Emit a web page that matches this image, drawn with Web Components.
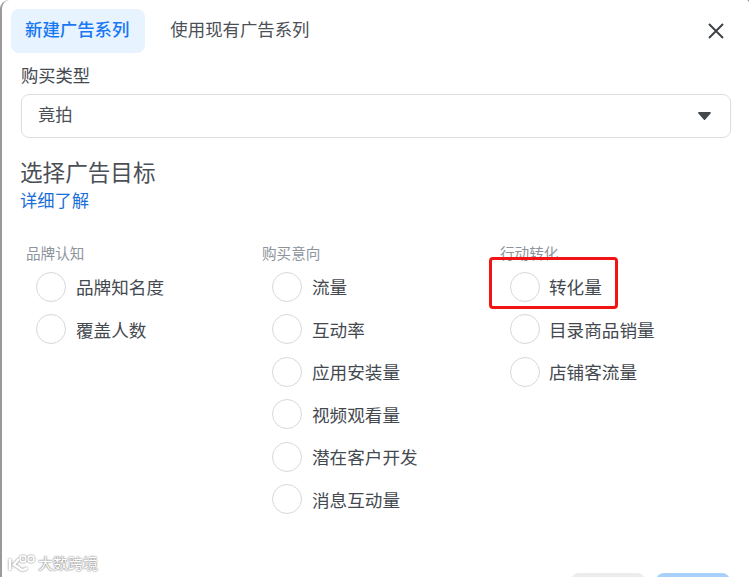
<!DOCTYPE html>
<html lang="zh">
<head>
<meta charset="utf-8">
<title>新建广告系列</title>
<style>
    html, body { margin: 0; height: 100%; background: #fff; overflow: hidden; }
    body { font-family: "Liberation Sans", "Noto Sans CJK SC", sans-serif; color: #444950; }
</style>
</head>
<body>
<ad-dialog>
    <ad-tabs slot="tabs">
        <ad-tab active>新建广告系列</ad-tab>
        <ad-tab>使用现有广告系列</ad-tab>
    </ad-tabs>
    <ad-select slot="select" label="购买类型" value="竟拍"></ad-select>
    <ad-group heading="品牌认知">
        <ad-radio>品牌知名度</ad-radio>
        <ad-radio>覆盖人数</ad-radio>
    </ad-group>
    <ad-group heading="购买意向">
        <ad-radio>流量</ad-radio>
        <ad-radio>互动率</ad-radio>
        <ad-radio>应用安装量</ad-radio>
        <ad-radio>视频观看量</ad-radio>
        <ad-radio>潜在客户开发</ad-radio>
        <ad-radio>消息互动量</ad-radio>
    </ad-group>
    <ad-group heading="行动转化" highlight style="--radio-gap: 9px">
        <ad-radio>转化量</ad-radio>
        <ad-radio>目录商品销量</ad-radio>
        <ad-radio>店铺客流量</ad-radio>
    </ad-group>
</ad-dialog>

<script>
class AdDialog extends HTMLElement {
    constructor() {
        super();
        this.attachShadow({ mode: "open" });
        this.shadowRoot.innerHTML = `
        <style>
            :host {
                display: block;
                position: relative;
                height: 577px;
                box-sizing: border-box;
                border-left: 2px solid #9a9a9a;
                border-top-left-radius: 9px;
                overflow: hidden;
                background: #fff;
            }
            .head { display: flex; justify-content: space-between; padding: 9px 25px 0 9px; }
            .close { width: 16px; height: 16px; margin-top: 14px; }
            .body { padding: 0 18px 0 19px; }
            h2 {
                margin: 20px 0 0 -1px;
                font-size: 22.6px;
                line-height: 32px;
                font-weight: 400;
                color: #4b4f56;
            }
            a {
                display: block;
                margin: -1px 0 0 -1px;
                font-size: 17.3px;
                line-height: 24px;
                color: #1a6ed8;
                text-decoration: none;
            }
            .cols {
                display: grid;
                grid-template-columns: 236px 238px 1fr;
                margin: 31px 0 0 5px;
            }
            .footer {
                position: absolute;
                left: 0;
                right: 0;
                bottom: 0;
                height: 4px;
                display: flex;
                justify-content: flex-end;
                gap: 11px;
                padding-right: 19px;
            }
            .btn { width: 74px; height: 30px; border-radius: 8px 8px 0 0; background: #ececee; }
            .btn.primary { background: #a9d0fb; }
            .mark {
                position: absolute;
                left: 5px;
                bottom: 3px;
                display: flex;
                align-items: center;
                gap: 1px;
                font-size: 15px;
                line-height: 20px;
                color: #fff;
                text-shadow: 0 0 2px #777, 0 0 1px #777;
            }
            .mark svg { width: 30px; height: 20px; filter: drop-shadow(0 0 1px #777); }
            .corner {
                position: absolute;
                top: -6px;
                right: -6px;
                width: 8px;
                height: 8px;
                border-radius: 50%;
                background: #9a9a9a;
            }
        </style>
        <div class="head">
            <slot name="tabs"></slot>
            <svg class="close" viewBox="0 0 16 16" fill="none" stroke="#3f4349" stroke-width="2">
                <path d="M1 1 15 15M15 1 1 15"/>
            </svg>
        </div>
        <div class="body">
            <slot name="select"></slot>
            <h2>选择广告目标</h2>
            <a href="#">详细了解</a>
            <div class="cols"><slot></slot></div>
        </div>
        <div class="footer"><div class="btn"></div><div class="btn primary"></div></div>
        <div class="mark">
            <svg viewBox="0 0 30 20" fill="none" stroke="#fff" stroke-width="2.4">
                <path d="M3 5v11M12 5 7 10.5 12 14c2 2.5 5 2.5 8 0"/>
                <circle cx="16" cy="5" r="3" stroke-width="1.4"/>
                <circle cx="24" cy="5" r="3" stroke-width="1.4"/>
            </svg>
            <span>大数跨境</span>
        </div>
        <div class="corner"></div>`;
    }
}
customElements.define("ad-dialog", AdDialog);

class AdTabs extends HTMLElement {
    constructor() {
        super();
        this.attachShadow({ mode: "open" });
        this.shadowRoot.innerHTML = `
        <style>
            :host { display: flex; }
        </style>
        <slot></slot>`;
    }
}
customElements.define("ad-tabs", AdTabs);

class AdTab extends HTMLElement {
    constructor() {
        super();
        this.attachShadow({ mode: "open" });
        this.shadowRoot.innerHTML = `
        <style>
            :host {
                display: block;
                height: 44px;
                padding: 0 16px 0 14px;
                margin-right: 11px;
                border-radius: 8px;
                font-size: 17.4px;
                line-height: 43px;
                color: #4b4f56;
            }
            :host([active]) {
                background: #e7f3ff;
                color: #1877f2;
                font-weight: 500;
            }
        </style>
        <slot></slot>`;
    }
}
customElements.define("ad-tab", AdTab);

class AdSelect extends HTMLElement {
    constructor() {
        super();
        this.attachShadow({ mode: "open" });
        this.shadowRoot.innerHTML = `
        <style>
            :host { display: block; margin-top: 11px; }
            label { display: block; font-size: 17.3px; line-height: 24px; color: #444950; }
            .box {
                display: flex;
                align-items: center;
                justify-content: space-between;
                box-sizing: border-box;
                height: 44px;
                margin-top: 6px;
                padding: 0 19px 0 16px;
                border: 1px solid #dadde1;
                border-radius: 8px;
                font-size: 17.3px;
                color: #4b4f56;
            }
            .value { margin-top: -6px; }
            svg { width: 13px; height: 8px; margin-top: -1px; }
        </style>
        <label></label>
        <div class="box">
            <span class="value"></span>
            <svg viewBox="0 0 13 8"><path d="M1.2 0h10.6c1 0 1.4 1 .8 1.6L7.3 7.4a1 1 0 0 1-1.6 0L.4 1.6C-.2 1 .2 0 1.2 0z" fill="#444950"/></svg>
        </div>`;
    }
    connectedCallback() {
        this.shadowRoot.querySelector("label").textContent = this.getAttribute("label");
        this.shadowRoot.querySelector(".value").textContent = this.getAttribute("value");
    }
}
customElements.define("ad-select", AdSelect);

class AdGroup extends HTMLElement {
    constructor() {
        super();
        this.attachShadow({ mode: "open" });
        this.shadowRoot.innerHTML = `
        <style>
            :host { display: block; position: relative; }
            .title { font-size: 14.6px; line-height: 20px; color: #8d949e; }
            .items { padding: 1.5px 0 0 10px; }
            .mark {
                position: absolute;
                left: -11px;
                top: 13px;
                width: 123px;
                height: 46px;
                border: 3px solid #f01414;
                border-radius: 4px;
                display: none;
            }
            :host([highlight]) .mark { display: block; }
        </style>
        <div class="title"></div>
        <div class="items"><slot></slot></div>
        <div class="mark"></div>`;
    }
    connectedCallback() {
        this.shadowRoot.querySelector(".title").textContent = this.getAttribute("heading");
    }
}
customElements.define("ad-group", AdGroup);

class AdRadio extends HTMLElement {
    constructor() {
        super();
        this.attachShadow({ mode: "open" });
        this.shadowRoot.innerHTML = `
        <style>
            :host {
                display: flex;
                align-items: center;
                gap: var(--radio-gap, 10px);
                height: 42.5px;
                font-size: 17.6px;
                color: #444950;
            }
            i {
                box-sizing: border-box;
                width: 30px;
                height: 30px;
                border: 1px solid #d5d8dc;
                border-radius: 50%;
            }
        </style>
        <i></i>
        <slot></slot>`;
    }
}
customElements.define("ad-radio", AdRadio);
</script>
</body>
</html>
